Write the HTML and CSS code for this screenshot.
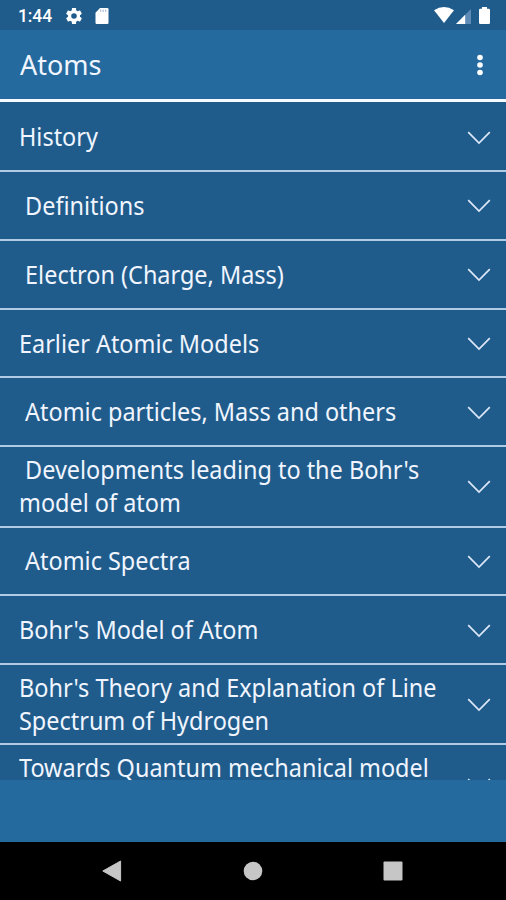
FILE: index.html
```html
<!DOCTYPE html>
<html lang="en">
<head>
<meta charset="utf-8">
<title>Atoms</title>
<link rel="stylesheet" href="styles.css">
</head>
<body>
<svg class="defs" width="0" height="0"><symbol id="chevron" viewBox="0 0 24 14"><path d="M1.200 1.200 12 12 22.800 1.200" fill="none" stroke="#dce8fa" stroke-width="1.700"/></symbol></svg>
<div class="screen">
<div class="status">
<span class="clock">1:44</span>
<svg class="gear" width="16" height="16" viewBox="2 2 20 20"><path fill="#fff" d="M19.430 12.980c.04-.32.07-.64.07-.98s-.03-.66-.07-.98l2.110-1.650c.19-.15.24-.42.12-.64l-2-3.460c-.12-.22-.39-.3-.61-.22l-2.490 1c-.52-.4-1.080-.73-1.690-.98l-.38-2.650C14.460 2.180 14.250 2 14 2h-4c-.25 0-.46.18-.49.42l-.38 2.650c-.61.25-1.170.59-1.690.98l-2.490-1c-.23-.09-.49 0-.61.22l-2 3.460c-.13.22-.07.49.12.64l2.110 1.650c-.04.32-.07.65-.07.98s.03.66.07.98l-2.110 1.650c-.19.15-.24.42-.12.64l2 3.460c.12.22.39.3.61.22l2.490-1c.52.4 1.080.73 1.690.98l.38 2.650c.03.24.24.42.49.42h4c.25 0 .46-.18.49-.42l.38-2.650c.61-.25 1.170-.59 1.690-.98l2.490 1c.23.09.49 0 .61-.22l2-3.460c.12-.22.07-.49-.12-.64zM12 15.500a3.500 3.500 0 1 1 0-7 3.500 3.500 0 0 1 0 7z"/></svg>
<svg class="card" width="14" height="16" viewBox="0 0 14 16"><path fill="#fff" d="M5 0h7.300Q13.500 0 13.500 1.300V14.700Q13.500 16 12.300 16H1.700Q.5 16 .5 14.700V4.700z"/><path stroke="#9db8d2" stroke-width="1" d="M5.700 1.500v2.500M8.200 1.500v2.500M10.700 1.500v2.500"/></svg>
<svg class="wifi" width="20" height="16" viewBox="0 0 20 16"><path fill="#fff" d="M0 3.200Q10-3.200 20 3.200L10 16z"/></svg>
<svg class="signal" width="15" height="15" viewBox="0 0 15 15"><path fill="#5d8bb5" d="M15 0v15H0z"/><path fill="#fff" d="M9.200 5.800V15H0z"/></svg>
<svg class="battery" width="11" height="17" viewBox="0 0 11 17"><path fill="#fff" d="M3 0h5v1.700h1.800Q11 1.700 11 3v12.700Q11 17 9.800 17H1.200Q0 17 0 15.700V3Q0 1.700 1.200 1.700H3z"/></svg>
</div>
<header class="bar"><h1>Atoms</h1><svg width="6" height="22" viewBox="0 0 6 22" fill="#fff"><circle cx="3" cy="3.500" r="2.800"/><circle cx="3" cy="11" r="2.800"/><circle cx="3" cy="18.500" r="2.800"/></svg></header>
<main class="list">
<div class="row"><span class="label">History</span><svg class="chev"><use href="#chevron"/></svg></div>
<div class="row"><span class="label">&nbsp;Definitions</span><svg class="chev"><use href="#chevron"/></svg></div>
<div class="row"><span class="label">&nbsp;Electron (Charge, Mass)</span><svg class="chev"><use href="#chevron"/></svg></div>
<div class="row"><span class="label">Earlier Atomic Models</span><svg class="chev"><use href="#chevron"/></svg></div>
<div class="row"><span class="label">&nbsp;Atomic particles, Mass and others</span><svg class="chev"><use href="#chevron"/></svg></div>
<div class="row tall"><span class="label">&nbsp;Developments leading to the Bohr's<br>model of atom</span><svg class="chev"><use href="#chevron"/></svg></div>
<div class="row"><span class="label">&nbsp;Atomic Spectra</span><svg class="chev"><use href="#chevron"/></svg></div>
<div class="row"><span class="label">Bohr's Model of Atom</span><svg class="chev"><use href="#chevron"/></svg></div>
<div class="row tall"><span class="label">Bohr's Theory and Explanation of Line<br>Spectrum of Hydrogen</span><svg class="chev"><use href="#chevron"/></svg></div>
<div class="row tall"><span class="label">Towards Quantum mechanical model</span><svg class="chev"><use href="#chevron"/></svg></div>
</main>
<div class="space"></div>
<nav class="nav" aria-label="System">
<svg width="20" height="22" viewBox="0 0 20 22"><path fill="#c6c6c6" d="M18.600 1v20L.8 11z" stroke="#c6c6c6" stroke-linejoin="round"/></svg>
<svg width="20" height="20" viewBox="0 0 20 20"><circle cx="10" cy="10" r="9.300" fill="#c6c6c6"/></svg>
<svg width="20" height="20" viewBox="0 0 20 20"><rect x=".5" y=".5" width="19" height="19" rx="1" fill="#c6c6c6"/></svg>
</nav>
</div>
</body>
</html>
```
FILE: styles.css
```css
* { box-sizing: border-box; }
body { margin: 0; background: #246a9e; }
.defs { display: none; }
.screen { width: 506px; height: 900px; display: flex; flex-direction: column; overflow: hidden; font-family: "Noto Sans", "Open Sans", sans-serif; color: #f0f5ff; }
.status { height: 30px; flex: none; display: flex; align-items: center; background: #205c8b; padding: 1px 16px 0 18px; }
.clock { font: 500 17.500px/20px Roboto, sans-serif; color: #fff; width: 48px; letter-spacing: -.1px; }
.card { margin-left: 13px; }
.wifi { margin-left: auto; margin-top: -2px; }
.signal { margin-left: 2px; margin-top: 2px; }
.battery { margin-left: 8px; }
.bar { height: 72px; flex: none; display: flex; align-items: center; justify-content: space-between; padding: 1px 23px 0 20px; border-bottom: 3px solid #f6faff; }
.bar h1 { margin: 0; font-size: 27px; line-height: 36px; font-weight: 400; }
.bar svg { margin-top: -1px; }
.list { height: 678px; flex: none; overflow: hidden; padding-top: 1.300px; background: #205c8b; }
.row { height: 68.800px; display: flex; align-items: center; justify-content: space-between; padding: 0 15px 0 19px; border-bottom: 2px solid #b2cbe4; font-size: 24.800px; line-height: 33px; white-space: nowrap; }
.label { width: 440px; flex: none; transform: scaleX(.945); transform-origin: left center; }
.tall { height: 80.300px; }
.row:last-child { align-items: flex-start; padding-top: 6px; }
.row:last-child .chev { margin-top: 27px; }
.chev { width: 24px; height: 14px; flex: none; margin-top: 2px; }
.space { flex: 1; }
.nav { height: 58px; flex: none; display: flex; align-items: center; justify-content: space-between; padding: 0 103px 0 102px; background: #000; }
```
